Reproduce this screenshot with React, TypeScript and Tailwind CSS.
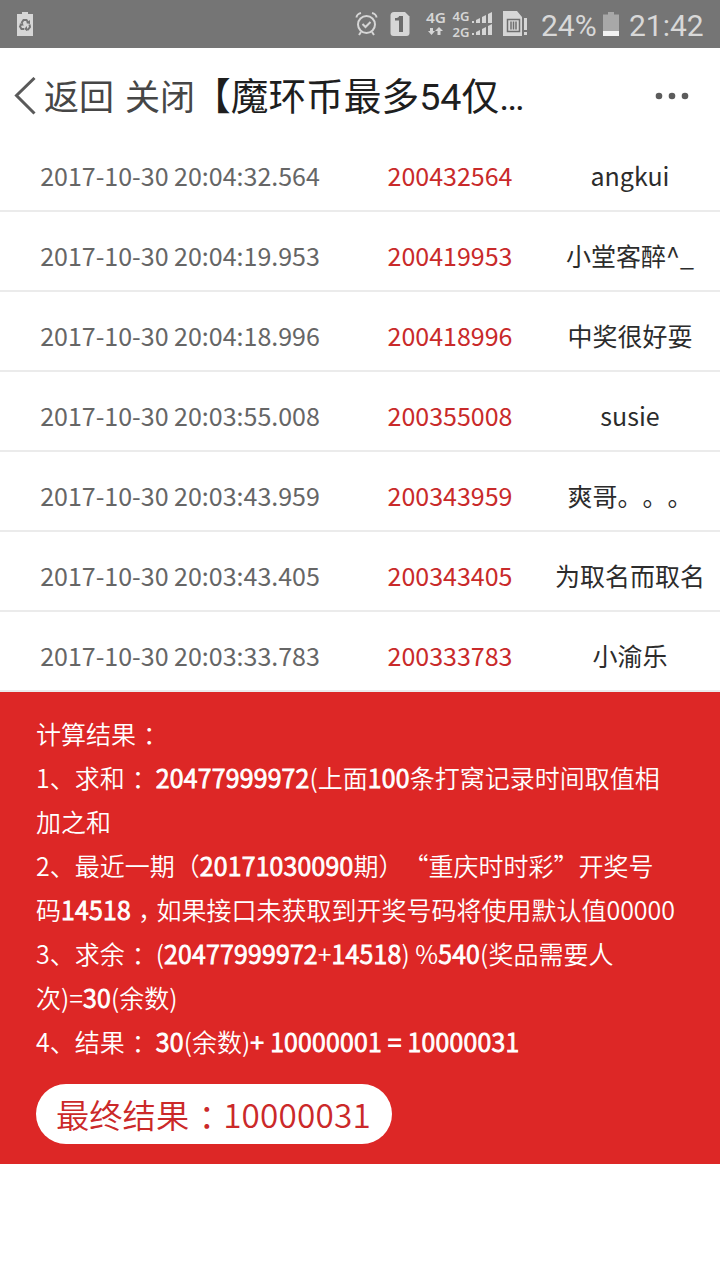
import type { ReactNode } from "react";

const records = [
  ["2017-10-30 20:04:32.564", "200432564", "angkui"],
  ["2017-10-30 20:04:19.953", "200419953", "小堂客醉^_"],
  ["2017-10-30 20:04:18.996", "200418996", "中奖很好耍"],
  ["2017-10-30 20:03:55.008", "200355008", "susie"],
  ["2017-10-30 20:03:43.959", "200343959", "爽哥。。。"],
  ["2017-10-30 20:03:43.405", "200343405", "为取名而取名"],
  ["2017-10-30 20:03:33.783", "200333783", "小渝乐"],
];

function B({ children }: { children: ReactNode }) {
  return <span className="tracking-[0.25px] [-webkit-text-stroke:0.9px_white]">{children}</span>;
}

function Mark({ children }: { children: ReactNode }) {
  return <span className="pl-[0.28em] pr-[0.24em] [font-feature-settings:'halt']">{children}</span>;
}

function StatusBar() {
  return (
    <div className="flex h-12 items-center bg-[#757575] pl-4 font-['Roboto',sans-serif] text-[#d9d9d9]">
      <svg width="18" height="24" viewBox="0 0 18 24" className="shrink-0">
        <path d="M1 2h5V0h6v2h5v22H1z" fill="#d6d6d6" />
        <g fill="none" stroke="#757575" strokeWidth="2">
          <path d="M5.5 11 7.5 8h3l2 3" />
          <path d="M13.5 12.5 14 15l-2 2.500h-2" />
          <path d="M8 17H5.500L4 14.500l1.500-2.500" />
        </g>
        <path d="m10 11 4 1V8zM11 14v5l-3-2zM3 12l4-1 .5 3z" fill="#757575" />
      </svg>
      <svg width="176" height="48" viewBox="354 0 176 48" className="ml-[320px] shrink-0">
        <g fill="none" stroke="#d6d6d6" strokeWidth="2">
          <circle cx="366.500" cy="24.500" r="8.500" />
          <path d="m362.500 24 3 3 5-5M361 32l-2 3M372 32l2 3M356.500 17.500c0-2 2-4 4.500-4.500M376.500 17.500c0-2-2-4-4.500-4.500" />
        </g>
        <path d="M394 12h11l4.500 4.500V33q0 3-3 3h-13q-3 0-3-3V15.500q0-3.500 3.500-3.500z" fill="#d6d6d6" />
        <path d="M399 16h4v16h-4V20.500h-4v-2.500q4 0 4-2z" fill="#6b6b6b" />
        <g fill="#d6d6d6" className="font-['Noto_Sans',sans-serif] font-semibold">
          <text x="426" y="23" fontSize="14.500" textLength="20" lengthAdjust="spacingAndGlyphs">4G</text>
          <text x="452.500" y="21" fontSize="12.500" textLength="17" lengthAdjust="spacingAndGlyphs">4G</text>
          <text x="452.500" y="36.500" fontSize="12.500" textLength="17" lengthAdjust="spacingAndGlyphs">2G</text>
        </g>
        <g fill="#d6d6d6">
          <path d="M430 28h3v3h2l-3.500 4-3.500-4h2zM439 27l4 4h-2.500v4h-3v-4H435z" />
          <path d="M472 21h2v2h-2zM476 20l4-2v5h-4zM482 17l4-2v8h-4zM488 14l4-2v11h-4zM472 33h2v2h-2zM476 32l4-2v5h-4zM482 29l4-2v8h-4zM488 26l4-2v11h-4z" />
          <path d="M503 11h14l5 6v19h-19zM524 18h3v12h-3zM524 32h3v3h-3z" />
        </g>
        <g fill="none" stroke="#6f6f6f" strokeWidth="1.500">
          <path d="M507.500 19.500h12v12h-12zM511 21.500v8M513.500 21.500v8M516 21.500v8" />
        </g>
      </svg>
      <span className="ml-[11px] w-[62px] whitespace-nowrap pt-[3px] text-[30px] leading-[48px] text-[#d8d8d8]">24%</span>
      <svg width="16" height="24" viewBox="0 0 16 24" className="shrink-0">
        <path d="M0 2.500h5V0h6v2.500h5V24H0z" fill="#a8a8a8" />
        <path d="M0 19h16v5H0z" fill="#f2f2f2" />
      </svg>
      <span className="ml-[10px] pt-[3px] text-[30px] leading-[48px] text-[#d8d8d8]">21:42</span>
    </div>
  );
}

export default function App() {
  return (
    <div className="h-[1280px] w-[720px] overflow-hidden bg-white font-['Noto_Sans_CJK_SC',sans-serif] [text-spacing-trim:space-all]">
      <StatusBar />
      <header className="flex h-[96px] items-center whitespace-nowrap pl-[14px] text-[#464646]">
        <svg width="22" height="38" viewBox="0 0 22 38" className="shrink-0">
          <path d="M20.500 1 2.500 18.500l18 18" fill="none" stroke="#5a5a5a" strokeWidth="3" />
        </svg>
        <span className="ml-[8px] w-[81px] pb-[2px] text-[35px] leading-[92px]">返回</span>
        <span className="w-[68px] pb-[2px] text-[35px] leading-[92px]">关闭</span>
        <span className="w-[461px] pt-[2px] text-[37.700px] leading-[92px] text-[#1e1e1e] font-['Roboto','Noto_Sans_CJK_SC',sans-serif]">【魔环币最多54仅…</span>
        <svg width="36" height="8" viewBox="0 0 36 8" className="shrink-0">
          <g fill="#5c5c5c">
            <circle cx="5" cy="4" r="3.300" />
            <circle cx="18" cy="4" r="3.300" />
            <circle cx="31" cy="4" r="3.300" />
          </g>
        </svg>
      </header>
      <main>
        <div className="-mt-3">
          {records.map(([time, value, name]) => (
            <div
              key={time}
              className="grid h-20 grid-cols-[360px_180px_180px] items-center whitespace-nowrap border-b-2 border-[#ebebeb] pt-[8px] text-center text-[25px] leading-[36px]"
            >
              <span className="text-[#666666]">{time}</span>
              <span className="text-[#c92a2a]">{value}</span>
              <span className="text-[#2c2c2c]">{name}</span>
            </div>
          ))}
        </div>
        <section className="h-[472px] bg-[#dd2726] px-9 pt-[19px] text-[25px] font-[350] leading-[44px] text-white">
          <div className="whitespace-nowrap">
            <p>计算结果<Mark>：</Mark></p>
            <p>1、求和<Mark>：</Mark> <B>20477999972</B>(上面<B>100</B>条打窝记录时间取值相</p>
            <p>加之和</p>
            <p>2、最近一期（<B>20171030090</B>期）“重庆时时彩”开奖号</p>
            <p>码<B>14518</B><Mark>，</Mark>如果接口未获取到开奖号码将使用默认值00000</p>
            <p>3、求余<Mark>：</Mark> (<B>20477999972</B>+<B>14518</B>) %<B>540</B>(奖品需要人</p>
            <p>次)=<B>30</B>(余数)</p>
            <p>4、结果<Mark>：</Mark> <B>30</B>(余数)<B>+ 10000001 = 10000031</B></p>
          </div>
          <div className="mt-[21px] h-[60px] w-[356px] whitespace-nowrap rounded-full bg-white pl-5 text-[33.300px] leading-[60px] text-[#cb2929]">
            最终结果<Mark>：</Mark><span className="tracking-[0.2px]">10000031</span>
          </div>
        </section>
      </main>
    </div>
  );
}
